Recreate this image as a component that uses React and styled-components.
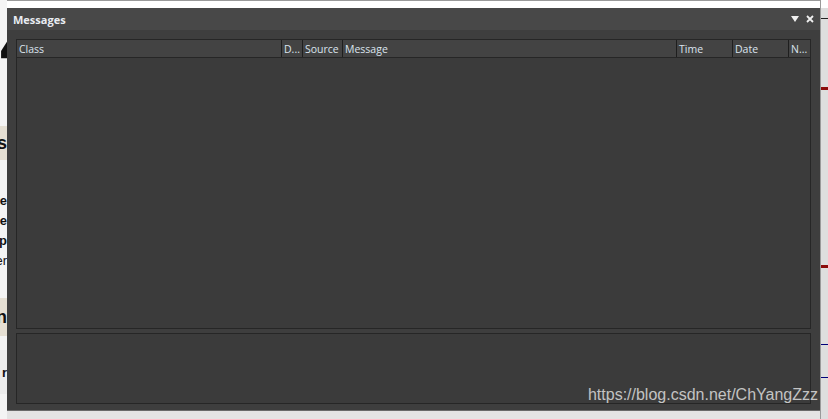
import React from "react";
import styled, { createGlobalStyle } from "styled-components";

const Global = createGlobalStyle`
  html, body { margin: 0; padding: 0; }
  body {
    width: 828px; height: 419px; overflow: hidden;
    background: #f3f3f3;
    font-family: "Open Sans", "Noto Sans", "Liberation Sans", sans-serif;
  }
`;

const Page = styled.div`
  position: relative;
  display: flex;
  width: 828px;
  height: 419px;
  overflow: hidden;
`;

const LeftStrip = styled.div`
  width: 7px;
  flex: none;
  display: flex;
  flex-direction: column;
  background: #f4f4f4;
  overflow: hidden;
`;

const LeftItem = styled.div`
  height: ${(p) => p.$h}px;
  flex: none;
  display: flex;
  overflow: hidden;
  justify-content: ${(p) => (p.$start ? "flex-start" : "flex-end")};
  align-items: center;
  background: ${(p) => p.$bg || "transparent"};
  color: #111;
  font-family: "Liberation Sans", Arial, sans-serif;
  font-weight: ${(p) => p.$w || 700};
  font-size: ${(p) => p.$fs || 13}px;
  white-space: nowrap;
  line-height: 1;
`;

const Center = styled.div`
  flex: none;
  width: 813px;
  display: flex;
  flex-direction: column;
`;

const TopStrip = styled.div`
  height: 8px;
  flex: none;
  background: #fff;
  border-top: 1px solid #9a9a9a;
  box-sizing: border-box;
`;

const Panel = styled.div`
  flex: none;
  height: 402px;
  display: flex;
  flex-direction: column;
  background: #3e3e3e;
  border-bottom: 1px solid #6a6a6a;
`;

const TitleBar = styled.div`
  height: 22px;
  flex: none;
  display: flex;
  align-items: center;
  padding: 0 6px 0 6px;
  background: #484848;
  color: #e8ecf2;
  font-size: 11px;
  font-weight: 700;
`;

const Title = styled.span`
  flex: 1;
`;

const TitleIcons = styled.div`
  display: flex;
  align-items: center;
  gap: 7px;
`;

const Body = styled.div`
  flex: 1;
  display: flex;
  flex-direction: column;
  padding: 9px 9px 6px 9px;
  gap: 4px;
  min-height: 0;
`;

const TableBox = styled.div`
  flex: none;
  height: 290px;
  box-sizing: border-box;
  border: 1px solid #262626;
  background: #3b3b3b;
  display: flex;
  flex-direction: column;
`;

const HeaderRow = styled.div`
  height: 18px;
  flex: none;
  box-sizing: border-box;
  display: flex;
  background: #434343;
  border-bottom: 1px solid #262626;
`;

const HeaderCell = styled.div`
  width: ${(p) => p.$w}px;
  flex: ${(p) => (p.$grow ? 1 : "none")};
  box-sizing: border-box;
  padding-left: 2px;
  display: flex;
  align-items: center;
  color: #dbe3ee;
  font-size: 10.5px;
  white-space: nowrap;
  overflow: hidden;
  border-right: ${(p) => (p.$last ? "none" : "1px solid #1e1e1e")};
`;

const DetailBox = styled.div`
  flex: 1;
  box-sizing: border-box;
  border: 1px solid #262626;
  background: #3b3b3b;
`;

const BottomStrip = styled.div`
  flex: 1;
  background: #e4e4e4;
`;

const RightStrip = styled.div`
  width: 8px;
  flex: none;
  display: flex;
  flex-direction: column;
  background: #dedede;
  border-left: 1px solid #9a9a9a;
  box-sizing: border-box;
`;

const RightSeg = styled.div`
  height: ${(p) => p.$h}px;
  flex: none;
  background: ${(p) => p.$bg || "transparent"};
`;

const Watermark = styled.div`
  position: absolute;
  right: 10px;
  bottom: 15px;
  color: rgba(235, 235, 235, 0.78);
  font-family: "Liberation Sans", Arial, sans-serif;
  font-size: 16px;
  pointer-events: none;
`;

const cols = [
  { label: "Class", w: 265 },
  { label: "D...", w: 21 },
  { label: "Source", w: 40 },
  { label: "Message", grow: true },
  { label: "Time", w: 56 },
  { label: "Date", w: 56 },
  { label: "N...", w: 21, last: true },
];

export default function App() {
  return (
    <Page>
      <Global />
      <LeftStrip>
        <LeftItem $h={14} />
        <LeftItem $h={60} $fs={70} $w={700} $start>4</LeftItem>
        <LeftItem $h={52} />
        <LeftItem $h={34} $bg="#e5dfd3" $fs={18}>s</LeftItem>
        <LeftItem $h={30} />
        <LeftItem $h={20}>te</LeftItem>
        <LeftItem $h={20}>ne</LeftItem>
        <LeftItem $h={20}>p</LeftItem>
        <LeftItem $h={20} $w={400}>er</LeftItem>
        <LeftItem $h={28} />
        <LeftItem $h={38} $bg="#e5dfd3" $fs={18}>n</LeftItem>
        <LeftItem $h={14} />
        <LeftItem $h={44} $bg="#ececec">r</LeftItem>
      </LeftStrip>
      <Center>
        <TopStrip />
        <Panel>
          <TitleBar>
            <Title>Messages</Title>
            <TitleIcons>
              <svg width="8" height="6" viewBox="0 0 8 6">
                <path d="M0 0 H8 L4 6 Z" fill="#f0f0f0" />
              </svg>
              <svg width="8" height="8" viewBox="0 0 8 8">
                <path d="M1 1 L7 7 M7 1 L1 7" stroke="#f0f0f0" strokeWidth="1.8" />
              </svg>
            </TitleIcons>
          </TitleBar>
          <Body>
            <TableBox>
              <HeaderRow>
                {cols.map((c) => (
                  <HeaderCell key={c.label} $w={c.w} $grow={c.grow} $last={c.last}>
                    {c.label}
                  </HeaderCell>
                ))}
              </HeaderRow>
            </TableBox>
            <DetailBox />
          </Body>
        </Panel>
        <BottomStrip />
      </Center>
      <RightStrip>
        <RightSeg $h={8} $bg="#ffffff" />
        <RightSeg $h={10} />
        <RightSeg $h={1} $bg="#222" />
        <RightSeg $h={68} />
        <RightSeg $h={3} $bg="#8b0b0b" />
        <RightSeg $h={175} />
        <RightSeg $h={3} $bg="#8b0b0b" />
        <RightSeg $h={76} />
        <RightSeg $h={1} $bg="#00007a" />
        <RightSeg $h={32} />
        <RightSeg $h={1} $bg="#00007a" />
      </RightStrip>
      <Watermark>https://blog.csdn.net/ChYangZzz</Watermark>
    </Page>
  );
}
